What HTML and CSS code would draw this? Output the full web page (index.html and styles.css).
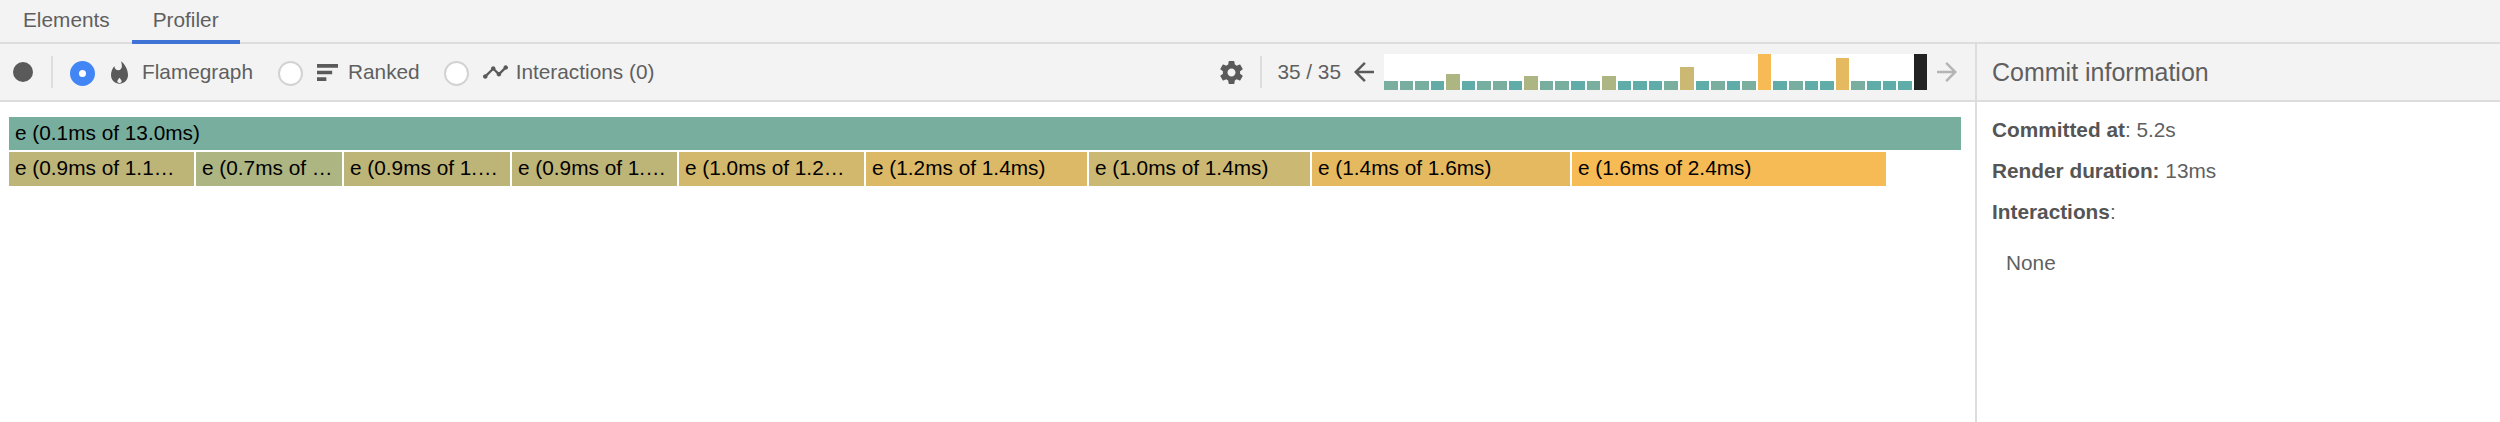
FILE: index.html
```html
<!DOCTYPE html>
<html lang="en">
<head>
<meta charset="utf-8">
<title>Profiler</title>
<link rel="stylesheet" href="styles.css">
</head>
<body>
<div class="app">
  <nav class="tabs">
    <div class="tab">Elements</div>
    <div class="tab tab-active">Profiler</div>
  </nav>
  <div class="panes">
    <main class="main">
      <header class="toolbar">
        <span class="record"></span>
        <span class="vsep vsep-left"></span>
        <span class="radio radio-on"></span>
        <svg class="icon icon-flame" viewBox="4 .67 16 21.33"><path fill-rule="evenodd" d="M13.5.67s.74 2.65.74 4.8c0 2.06-1.35 3.73-3.41 3.73-2.07 0-3.63-1.67-3.63-3.73l.03-.36C5.21 7.51 4 10.62 4 14c0 4.42 3.58 8 8 8s8-3.58 8-8C20 8.61 17.41 3.8 13.5.67zM12 16.2c-1.1 1.4-2 2.3-2 3.4 0 .9.8 1.5 2 1.5s2-.6 2-1.5c0-1.1-.9-2-2-3.4z"/></svg>
        <span class="label label-flame">Flamegraph</span>
        <span class="radio"></span>
        <svg class="icon icon-ranked" viewBox="3 5 18 14" preserveAspectRatio="none"><path d="M3 5h18v3H3zM3 10.5h13v3H3zM3 16h8v3H3z"/></svg>
        <span class="label label-ranked">Ranked</span>
        <span class="radio"></span>
        <svg class="icon icon-inter" viewBox="1 6 22 12"><path d="M23 8c0 1.1-.9 2-2 2-.18 0-.35-.02-.51-.07l-3.56 3.55c.05.16.07.34.07.52 0 1.1-.9 2-2 2s-2-.9-2-2c0-.18.02-.36.07-.52l-2.55-2.55c-.16.05-.34.07-.52.07s-.36-.02-.52-.07l-4.55 4.56c.05.16.07.33.07.51 0 1.1-.9 2-2 2s-2-.9-2-2 .9-2 2-2c.18 0 .35.02.51.07l4.56-4.55C8.02 9.36 8 9.18 8 9c0-1.1.9-2 2-2s2 .9 2 2c0 .18-.02.36-.07.52l2.55 2.55c.16-.05.34-.07.52-.07s.36.02.52.07l3.55-3.56C19.02 8.35 19 8.18 19 8c0-1.1.9-2 2-2s2 .9 2 2z"/></svg>
        <span class="label">Interactions (0)</span>
        <div class="toolbar-right">
          <svg class="icon icon-gear" viewBox="2.3 2 19.4 20"><path d="M19.43 12.98c.04-.32.07-.64.07-.98s-.03-.66-.07-.98l2.11-1.65c.19-.15.24-.42.12-.64l-2-3.46c-.12-.22-.39-.3-.61-.22l-2.49 1c-.52-.4-1.08-.73-1.69-.98l-.38-2.65C14.46 2.18 14.25 2 14 2h-4c-.25 0-.46.18-.49.42l-.38 2.65c-.61.25-1.17.59-1.69.98l-2.49-1c-.23-.09-.49 0-.61.22l-2 3.46c-.13.22-.07.49.12.64l2.11 1.65c-.04.32-.07.65-.07.98s.03.66.07.98l-2.11 1.65c-.19.15-.24.42-.12.64l2 3.46c.12.22.39.3.61.22l2.49-1c.52.4 1.08.73 1.69.98l.38 2.65c.03.24.24.42.49.42h4c.25 0 .46-.18.49-.42l.38-2.65c.61-.25 1.17-.59 1.69-.98l2.49 1c.23.09.49 0 .61-.22l2-3.46c.12-.22.07-.49-.12-.64l-2.11-1.65zM12 15.5c-1.93 0-3.5-1.57-3.5-3.5s1.57-3.5 3.5-3.5 3.5 1.57 3.5 3.5-1.57 3.5-3.5 3.5z"/></svg>
          <span class="vsep vsep-right"></span>
          <span class="label counter">35 / 35</span>
          <svg class="icon icon-arrow" viewBox="4 4 16 16"><path d="M20 11H7.83l5.59-5.59L12 4l-8 8 8 8 1.41-1.41L7.83 13H20v-2z"/></svg>
          <div class="graph">
            <i style="height:9px;background:#7aae9e"></i><i style="height:9px;background:#78ae9f"></i><i style="height:9px;background:#76aea0"></i><i style="height:9px;background:#62aba6"></i><i style="height:16px;background:#adb582"></i>
            <i style="height:9px;background:#5faca8"></i><i style="height:9px;background:#76aea0"></i><i style="height:9px;background:#7aae9e"></i><i style="height:9px;background:#5faca8"></i><i style="height:14px;background:#adb582"></i>
            <i style="height:9px;background:#78ae9f"></i><i style="height:9px;background:#78ae9f"></i><i style="height:9px;background:#5faca8"></i><i style="height:9px;background:#7aae9e"></i><i style="height:14px;background:#adb582"></i>
            <i style="height:9px;background:#5faca8"></i><i style="height:9px;background:#5faca8"></i><i style="height:9px;background:#5faca8"></i><i style="height:9px;background:#7aae9e"></i><i style="height:23px;background:#cbb873"></i>
            <i style="height:9px;background:#5faca8"></i><i style="height:9px;background:#7aae9e"></i><i style="height:9px;background:#5faca8"></i><i style="height:9px;background:#7aae9e"></i><i style="height:36px;background:#f6bb54"></i>
            <i style="height:9px;background:#5faca8"></i><i style="height:9px;background:#78ae9f"></i><i style="height:9px;background:#5faca8"></i><i style="height:9px;background:#5faca8"></i><i style="height:32px;background:#e5b95f"></i>
            <i style="height:9px;background:#7aae9e"></i><i style="height:9px;background:#5faca8"></i><i style="height:9px;background:#5faca8"></i><i style="height:9px;background:#5faca8"></i><i class="bar-current"></i>
          </div>
          <svg class="icon icon-arrow icon-arrow-off" viewBox="4 4 16 16"><path d="M12 4l-1.41 1.41L16.17 11H4v2h12.17l-5.58 5.59L12 20l8-8z"/></svg>
        </div>
      </header>
      <section class="flame">
        <div class="flame-row flame-row-top">
          <div class="node" style="width:1952px;background:#78ae9e">e (0.1ms of 13.0ms)</div>
        </div>
        <div class="flame-row">
          <div class="node" style="width:185px;background:#bdb478">e (0.9ms of 1.1ms)</div>
          <div class="node" style="width:146px;background:#adb582">e (0.7ms of 1.1ms)</div>
          <div class="node" style="width:166px;background:#bdb478">e (0.9ms of 1.1ms)</div>
          <div class="node" style="width:165px;background:#bdb478">e (0.9ms of 1.1ms)</div>
          <div class="node" style="width:185px;background:#d1b86c">e (1.0ms of 1.2ms)</div>
          <div class="node" style="width:221px;background:#dcb966">e (1.2ms of 1.4ms)</div>
          <div class="node" style="width:221px;background:#cbb873">e (1.0ms of 1.4ms)</div>
          <div class="node" style="width:258px;background:#e5b95f">e (1.4ms of 1.6ms)</div>
          <div class="node" style="width:314px;background:#f6bb54">e (1.6ms of 2.4ms)</div>
        </div>
      </section>
    </main>
    <aside class="side">
      <header class="side-head">Commit information</header>
      <div class="side-body">
        <div class="detail"><b>Committed at</b>: 5.2s</div>
        <div class="detail"><b>Render duration:</b> 13ms</div>
        <div class="detail"><b>Interactions</b>:</div>
        <div class="none">None</div>
      </div>
    </aside>
  </div>
</div>
</body>
</html>
```
FILE: styles.css
```css
* { box-sizing: border-box; }
html, body { margin: 0; height: 100%; }
body {
  font-family: "Liberation Sans", Arial, sans-serif;
  font-size: 20.8px;
  color: #5f5f5f;
  background: #fff;
  overflow: hidden;
}
.app { display: flex; flex-direction: column; height: 422px; }

.tabs {
  display: flex;
  height: 44px;
  padding-left: 2px;
  background: #f3f3f3;
  border-bottom: 2px solid #dddddd;
  flex: none;
}
.tab {
  height: 44px;
  padding: 0 21px;
  line-height: 40px;
  color: #5f5f5f;
}
.tab-active { margin-left: 1px; border-bottom: 4px solid #3f74d6; }

.panes { display: flex; flex: 1; min-height: 0; }
.main { flex: 1; min-width: 0; display: flex; flex-direction: column; }

.toolbar {
  display: flex;
  align-items: center;
  height: 58px;
  flex: none;
  padding-left: 13px;
  background: #f3f3f3;
  border-bottom: 2px solid #dddddd;
}
.record { width: 20px; height: 20px; border-radius: 50%; background: #5a5a5a; flex: none; }
.vsep { width: 2px; height: 32px; background: #dddddd; flex: none; }
.vsep-left { margin: 0 17px 0 18px; }
.vsep-right { margin: 0 15px 0 17px; }

.radio {
  width: 25px;
  height: 25px;
  margin-top: 2px;
  border-radius: 50%;
  background: #fff;
  border: 2px solid #d2d2d2;
  flex: none;
}
.radio-on { background: #fff; border: 9px solid #4285f4; }

.icon { fill: #5a5a5a; flex: none; display: block; }
.icon-flame { width: 17px; height: 23px; margin: 0 14px 0 16px; }
.icon-ranked { width: 21px; height: 17px; margin: 0 10px 0 14px; }
.icon-inter { width: 25px; height: 14px; margin: 0 8px 0 14px; }
.icon-gear { width: 23px; height: 23px; }
.icon-arrow { width: 20px; height: 20px; fill: #5a5a5a; }
.icon-arrow-off { fill: #b4b4b4; margin-left: 10px; }

.label { white-space: nowrap; line-height: 24px; }
.label-flame { margin-right: 25px; }
.label-ranked { margin-right: 24px; }

.toolbar-right { display: flex; align-items: center; margin-left: auto; padding-right: 18px; }
.counter { margin-right: 13px; }

.graph {
  display: flex;
  align-items: flex-end;
  gap: 2px;
  width: 543px;
  height: 36px;
  margin-left: 10px;
  background: #fff;
}
.graph i { flex: 1; display: block; }
.graph .bar-current { height: 36px; background: #222222; }

.flame { flex: 1; padding: 15px 0 0 9px; background: #fff; }
.flame-row { display: flex; gap: 2px; height: 34px; }
.flame-row-top { height: 33px; margin-bottom: 2px; }
.node {
  flex: none;
  height: 100%;
  padding: 0 6px;
  line-height: 32px;
  color: #000;
  white-space: nowrap;
  overflow: hidden;
  text-overflow: ellipsis;
}

.side {
  width: 525px;
  flex: none;
  border-left: 2px solid #dddddd;
  display: flex;
  flex-direction: column;
}
.side-head {
  height: 58px;
  flex: none;
  padding-left: 15px;
  font-size: 25px;
  line-height: 56px;
  background: #f3f3f3;
  border-bottom: 2px solid #dddddd;
  color: #5f5f5f;
}
.side-body { padding: 16px 15px; }
.detail { line-height: 24px; margin-bottom: 17px; }
.detail b { color: #555555; font-weight: 700; }
.none { margin: 27px 0 0 14px; line-height: 24px; }
```
